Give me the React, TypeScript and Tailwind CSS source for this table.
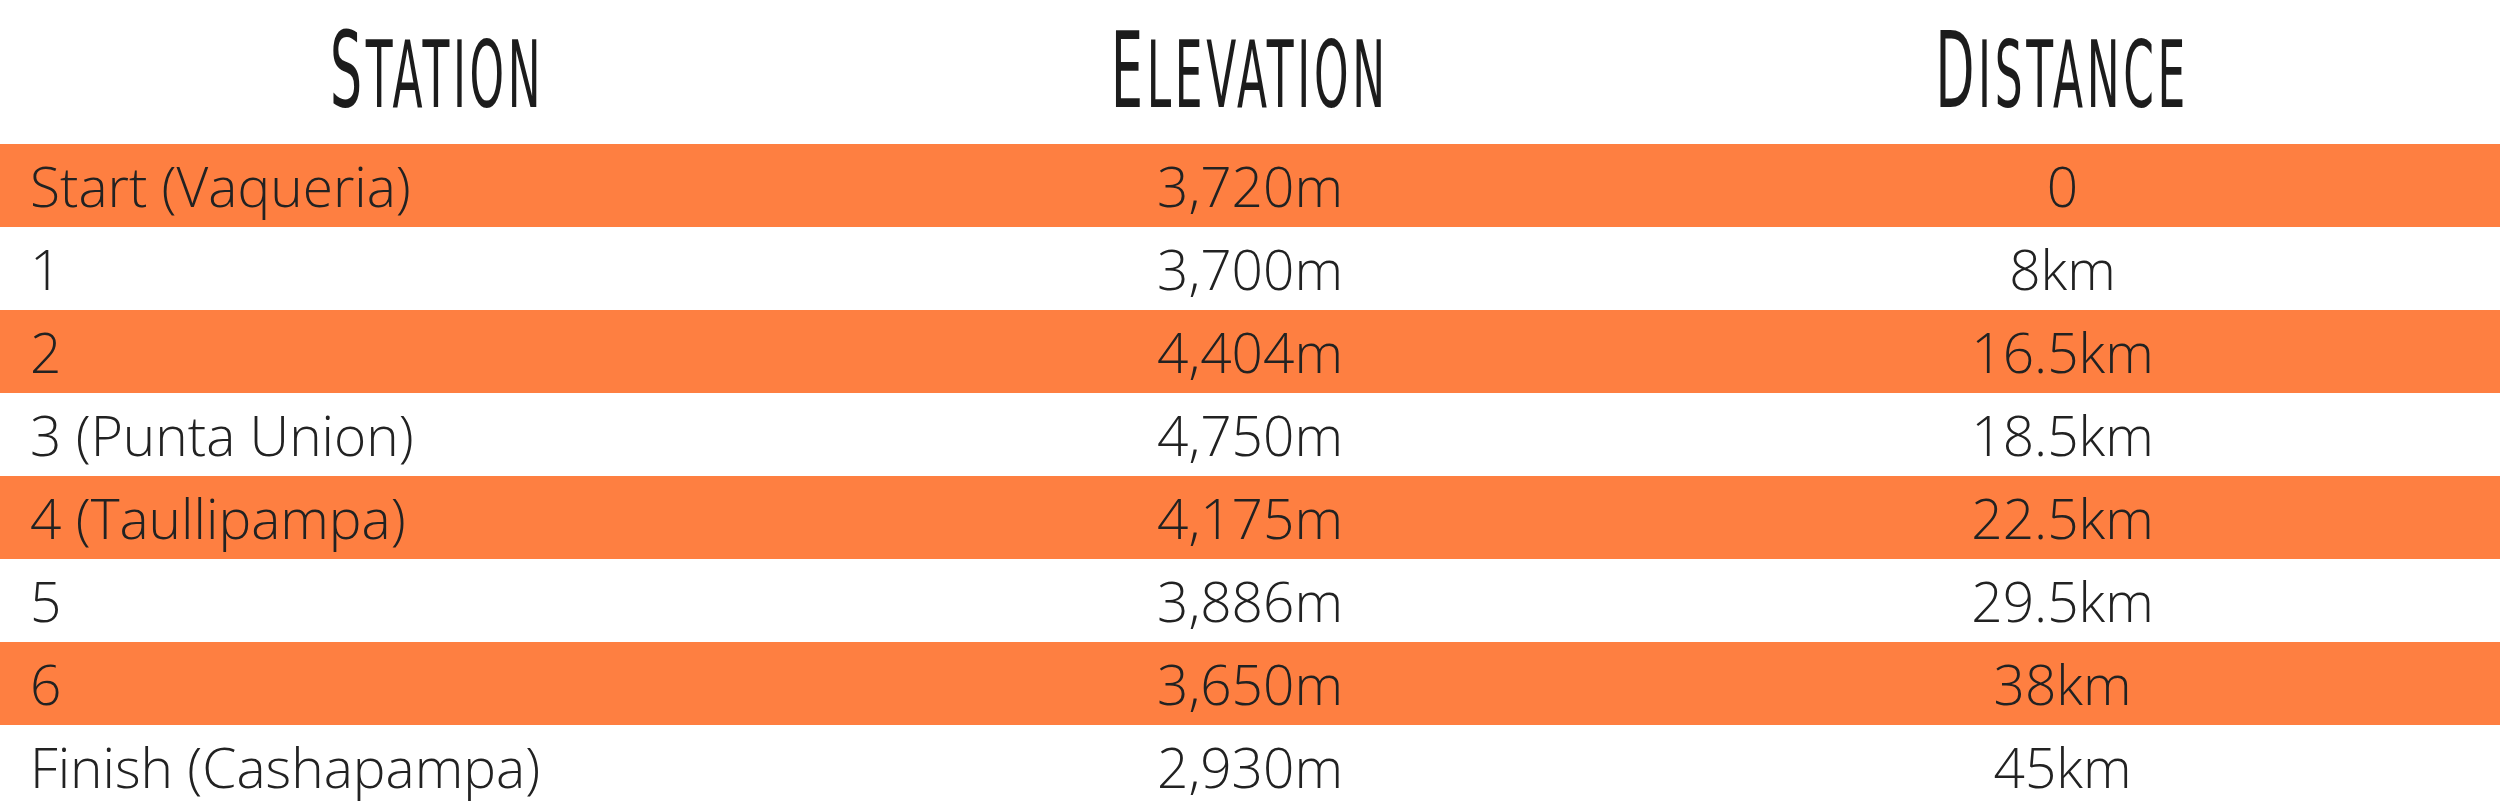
import React from "react";

const rows: [string, string, string][] = [
  ["Start (Vaqueria)", "3,720m", "0"],
  ["1", "3,700m", "8km"],
  ["2", "4,404m", "16.5km"],
  ["3 (Punta Union)", "4,750m", "18.5km"],
  ["4 (Taullipampa)", "4,175m", "22.5km"],
  ["5", "3,886m", "29.5km"],
  ["6", "3,650m", "38km"],
  ["Finish (Cashapampa)", "2,930m", "45km"],
];

function Head({ text }: { text: string }) {
  return (
    <div className="flex items-center justify-center h-full">
      <span className="inline-block scale-x-[0.53] origin-center font-['DejaVu_Sans_Condensed','DejaVu_Sans',sans-serif] text-[#1c1c1c] tracking-[7px] leading-none whitespace-nowrap mt-[-2px]">
        <span className="text-[106px]">{text[0]}</span>
        <span className="text-[92px]">{text.slice(1).toUpperCase()}</span>
      </span>
    </div>
  );
}

export default function App() {
  return (
    <div className="w-[2500px] h-[807px] bg-white overflow-hidden font-['Open_Sans',sans-serif] text-[#222]">
      <div className="grid grid-cols-[875px_750px_875px] h-[144px]">
        <Head text="Station" />
        <Head text="Elevation" />
        <Head text="Distance" />
      </div>
      {rows.map((r, i) => (
        <div
          key={i}
          className={`grid grid-cols-[875px_750px_875px] h-[83px] items-center ${
            i % 2 === 0 ? "bg-[#fe7f41]" : "bg-white"
          }`}
        >
          <div className="pl-[30px] text-[55px] font-light leading-none whitespace-nowrap">
            {r[0]}
          </div>
          <div className="text-center text-[55px] font-light leading-none whitespace-nowrap">
            {r[1]}
          </div>
          <div className="text-center text-[55px] font-light leading-none whitespace-nowrap">
            {r[2]}
          </div>
        </div>
      ))}
    </div>
  );
}
